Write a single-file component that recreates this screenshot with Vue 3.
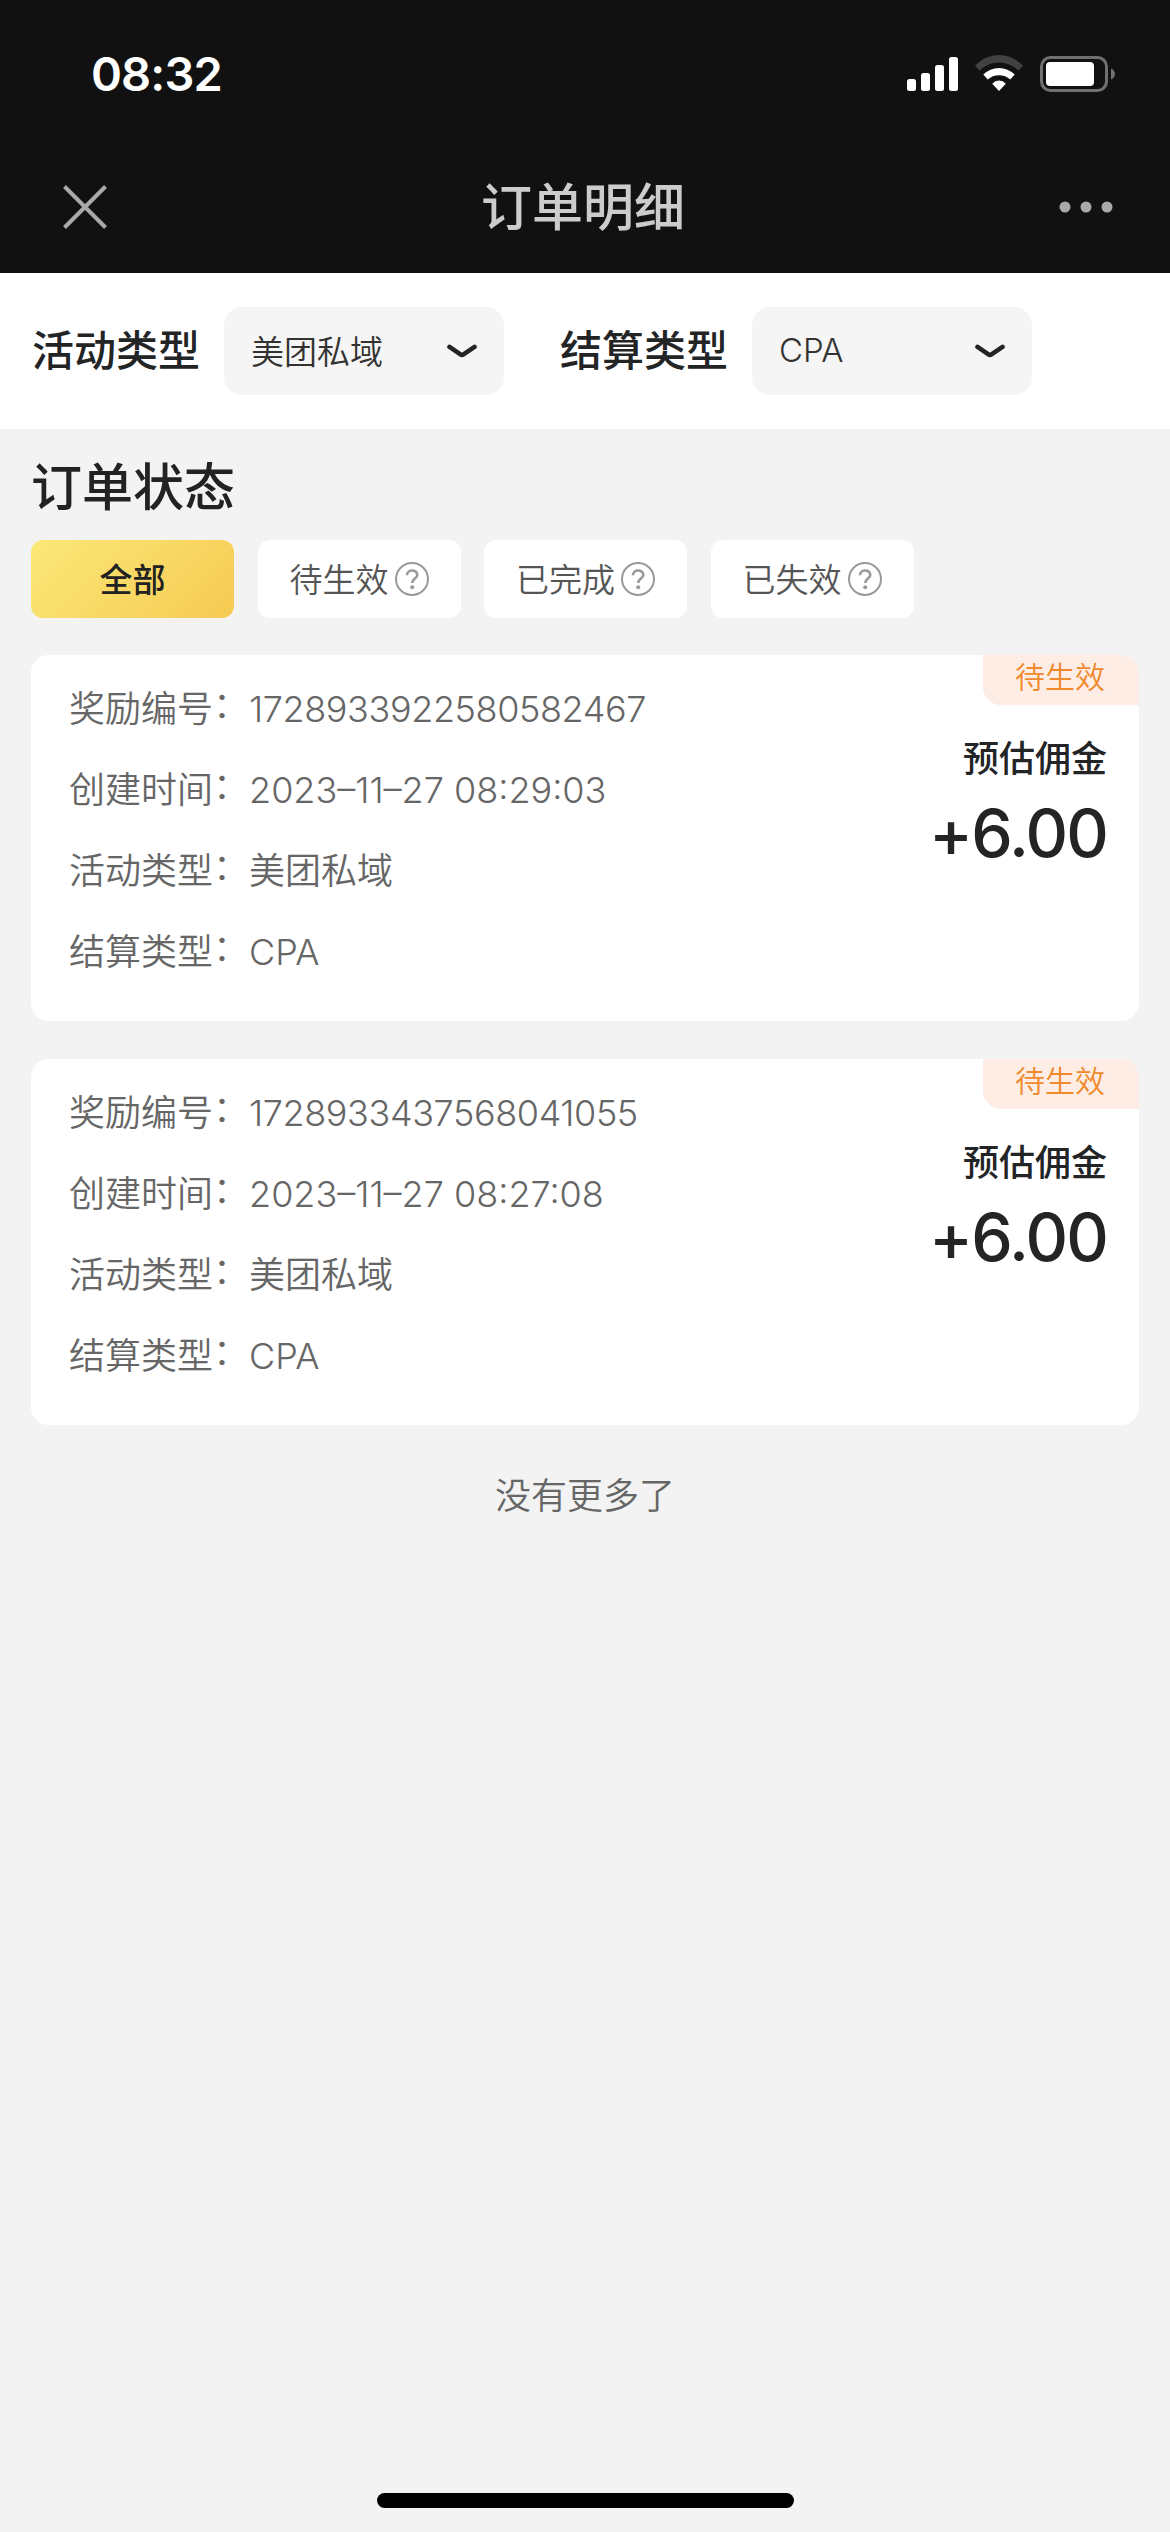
<template>
  <div class="order-page">
    <header class="top">
      <div class="status-bar">
        <span class="clock">08:32</span>
        <div class="status-icons">
          <svg class="signal" width="51" height="36" viewBox="0 0 51 36" fill="#fff">
            <rect x="0" y="23" width="9" height="12" rx="2.5" />
            <rect x="14" y="17" width="9" height="18" rx="2.5" />
            <rect x="28" y="9" width="9" height="26" rx="2.5" />
            <rect x="42" y="1" width="9" height="34" rx="2.5" />
          </svg>
          <svg class="wifi" width="48" height="36" viewBox="0 0 48 36" fill="#fff">
            <path fill="#414141" d="M0 10.8Q10.4 0 24 0T48 10.8L43.4 15.6Q35 7.600 24 7.600T4.600 15.6Z" />
            <path d="M8.300 19.600Q15 12.900 24 12.900T39.700 19.600L35.300 24.600Q30.400 20.200 24 20.200T12.700 24.600Z" />
            <path d="M17.200 28.700Q20 25.600 24 25.600T30.800 28.700L24 36Z" />
          </svg>
          <svg class="battery" width="76" height="36" viewBox="0 0 76 36">
            <rect x="1.500" y="1.500" width="65" height="33" rx="9" fill="none" stroke="#707070" stroke-width="3" />
            <rect x="6" y="6" width="48" height="24" rx="4" fill="#fff" />
            <path d="M71 12.500Q75 14.500 75 18T71 23.500Z" fill="#707070" />
          </svg>
        </div>
      </div>
      <div class="nav-bar">
        <svg class="close" width="44" height="44" viewBox="0 0 44 44" fill="none" stroke="#a9a9a9" stroke-width="4">
          <path d="M1.500 1.500L42.500 42.500M42.500 1.500L1.500 42.500" />
        </svg>
        <h1>订单明细</h1>
        <svg class="more" width="54" height="12" viewBox="0 0 54 12" fill="#a9a9a9">
          <circle cx="6" cy="6" r="5.500" />
          <circle cx="27" cy="6" r="5.500" />
          <circle cx="48" cy="6" r="5.500" />
        </svg>
      </div>
    </header>

    <!-- Filters -->
    <section class="filters">
      <div v-for="f in filters" :key="f.label" class="filter">
        <span class="filter-label">{{ f.label }}</span>
        <button class="select">
          <span>{{ f.value }}</span>
          <svg width="30" height="14" viewBox="0 0 30 14" fill="none" stroke="#232426" stroke-width="4.600" stroke-linecap="round" stroke-linejoin="round">
            <path d="M2.500 2.900L13.500 10.300Q15 11.300 16.500 10.300L27.500 2.900" />
          </svg>
        </button>
      </div>
    </section>

    <main class="content">
      <h2>订单状态</h2>
      <div class="tabs">
        <button v-for="tab in tabs" :key="tab.id" :class="['tab', { active: activeTab === tab.id }]" @click="activeTab = tab.id">
          <span>{{ tab.label }}</span>
          <svg v-if="tab.help" width="34" height="34" viewBox="0 0 34 34" fill="none" stroke="#999">
            <circle cx="17" cy="17" r="16" stroke-width="2" />
            <path d="M12 13.200C12 6.900 22.300 7 22.300 13C22.300 16.600 17.200 16.700 17.200 21" stroke-width="2.600" />
            <circle cx="17.200" cy="25.200" r="2" fill="#999" stroke="none" />
          </svg>
        </button>
      </div>

      <!-- Order list -->
      <div class="list">
        <article v-for="order in shown" :key="order.id" class="card">
          <dl class="info">
            <div v-for="field in fields" :key="field.key" class="row">
              <dt>{{ field.label }}<span class="colon">：</span></dt>
              <dd :class="'value-' + field.key">{{ order[field.key] }}</dd>
            </div>
          </dl>
          <div class="side">
            <span class="badge">待生效</span>
            <span class="side-label">预估佣金</span>
            <strong class="amount">+{{ order.amount.toFixed(2) }}</strong>
          </div>
        </article>
      </div>
      <p class="no-more">没有更多了</p>
    </main>

    <div class="home-bar"></div>
  </div>
</template>

<script setup>
import { ref, computed } from 'vue'

const activeTab = ref('all')

const filters = [
  { label: '活动类型', value: '美团私域' },
  { label: '结算类型', value: 'CPA' },
]

const tabs = [
  { id: 'all', label: '全部', help: false },
  { id: 'pending', label: '待生效', help: true },
  { id: 'done', label: '已完成', help: true },
  { id: 'invalid', label: '已失效', help: true },
]

const fields = [
  { key: 'id', label: '奖励编号' },
  { key: 'time', label: '创建时间' },
  { key: 'activity', label: '活动类型' },
  { key: 'settle', label: '结算类型' },
]

const orders = [
  { id: '1728933922580582467', time: '2023–11–27 08:29:03', activity: '美团私域', settle: 'CPA', amount: 6, status: 'pending' },
  { id: '1728933437568041055', time: '2023–11–27 08:27:08', activity: '美团私域', settle: 'CPA', amount: 6, status: 'pending' },
]

const shown = computed(() => activeTab.value === 'all' ? orders : orders.filter(o => o.status === activeTab.value))
</script>

<style>
body { margin: 0; background: #f3f3f3; }
</style>

<style scoped>
.order-page { width: 1170px; height: 2532px; box-sizing: border-box; display: flex; flex-direction: column; background: #f3f3f3; color: #232426; font-family: Inter, "Noto Sans CJK SC", sans-serif; overflow: hidden; }
h1, h2, p, dl, dd { margin: 0; }
svg { display: block; flex-shrink: 0; }
button { border: none; font-family: inherit; cursor: pointer; }

.top { height: 273px; background: #111; }
.status-bar { height: 148px; display: flex; justify-content: space-between; align-items: center; padding: 0 54px 0 91px; box-sizing: border-box; }
.clock { font-size: 47px; font-weight: 600; letter-spacing: -0.9px; color: #fff; line-height: 60px; }
.status-icons { display: flex; align-items: center; }
.wifi { margin-left: 17px; margin-top: -2px; }
.battery { margin-left: 17px; }
.nav-bar { height: 118px; display: flex; justify-content: space-between; align-items: center; padding: 0 57px 0 63px; }
.nav-bar h1 { font-size: 51px; font-weight: 500; color: #ccc; line-height: 60px; padding-top: 1px; }

.filters { height: 156px; display: flex; align-items: center; gap: 56px; padding-left: 32px; background: #fff; }
.filter { display: flex; align-items: center; gap: 24px; }
.filter-label { font-size: 42px; font-weight: 500; line-height: 60px; }
.select { display: flex; justify-content: space-between; align-items: center; width: 280px; height: 88px; padding: 0 27px; border-radius: 18px; background: #f5f5f5; font-size: 33px; font-weight: 350; color: #323230; }
.select span { padding-bottom: 2px; }

.content { flex: 1; padding: 29px 31px 0; }
.content h2 { font-size: 51px; font-weight: 500; line-height: 60px; margin-bottom: 22px; color: #222; }
.tabs { display: flex; gap: 23.500px; }
.tab { display: flex; justify-content: center; align-items: center; gap: 6px; width: 203px; height: 78px; padding: 0; border-radius: 12px; background: #fff; font-size: 33px; font-weight: 350; color: #555; }
.tab span { padding-bottom: 2px; }
.tab.active { background: linear-gradient(135deg, #fbe878, #f6ca52); color: #222; font-weight: 500; }

.list { display: flex; flex-direction: column; gap: 38px; margin-top: 37px; }
.card { display: flex; justify-content: space-between; height: 366px; border-radius: 18px; background: #fff; overflow: hidden; }
.info { padding: 14px 0 0 38px; }
.row { display: flex; height: 81px; line-height: 81px; font-size: 36px; font-weight: 350; color: #666; }
.colon { line-height: 1; vertical-align: 4px; }
.value-id { letter-spacing: -0.4px; }
.side { display: flex; flex-direction: column; align-items: flex-end; }
.badge { width: 156px; height: 50px; line-height: 45px; box-sizing: border-box; border-radius: 0 0 0 18px; background: #fdede5; color: #f08a2c; font-size: 30px; font-weight: 350; padding-left: 32px; }
.side-label { margin: 29px 32px 0 0; font-size: 36px; font-weight: 500; line-height: 50px; }
.amount { margin: 9px 32px 0 0; font-size: 66px; font-weight: 500; line-height: 80px; letter-spacing: -1.8px; }

.no-more { margin-top: 41px; text-align: center; font-size: 36px; font-weight: 350; line-height: 60px; color: #666; }
.home-bar { align-self: center; width: 417px; height: 15px; border-radius: 8px; background: #000; margin-bottom: 24px; }
</style>
